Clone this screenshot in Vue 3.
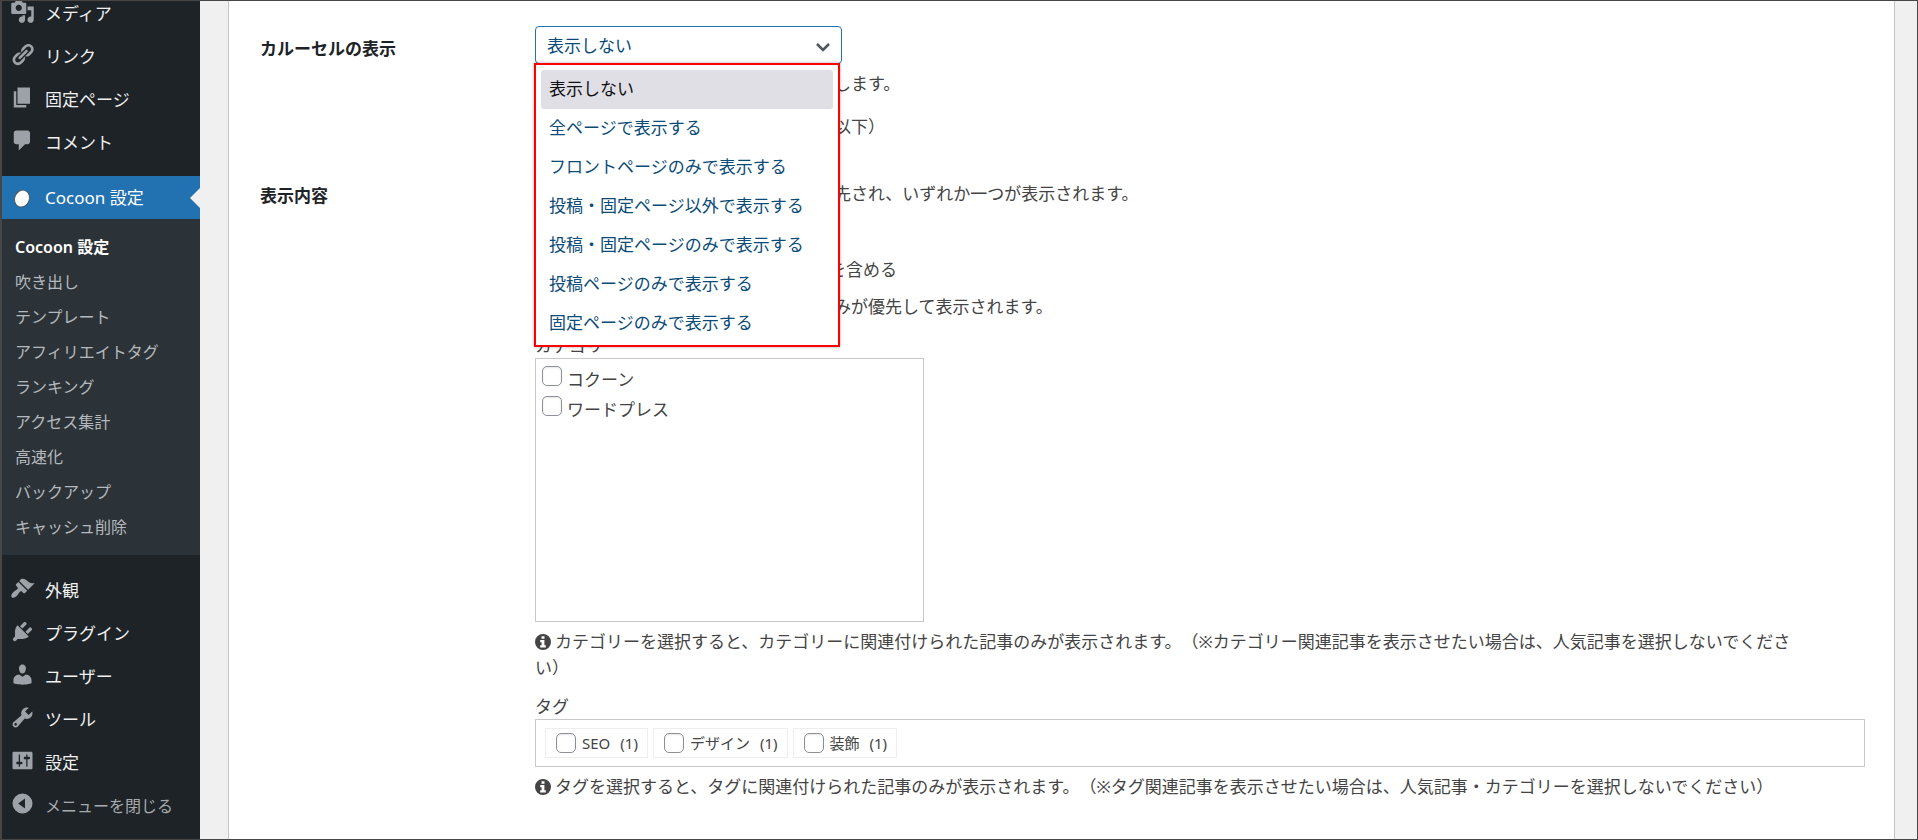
<script setup>
import { ref } from 'vue'

const topMenu = [
  { label: 'メディア', icon: 'M13 11V4c0-.55-.45-1-1-1h-1.67L9 1H5L3.67 3H2c-.55 0-1 .45-1 1v7c0 .55.45 1 1 1h10c.55 0 1-.45 1-1zM7 4.5c1.38 0 2.5 1.12 2.5 2.5S8.38 9.5 7 9.5 4.5 8.38 4.5 7 5.62 4.5 7 4.5zM14 6h5v10.5c0 1.38-1.12 2.5-2.5 2.5S14 17.88 14 16.5s1.12-2.5 2.5-2.5c.17 0 .34.02.5.05V9h-3V6zm-4 8.05V13h2v3.5c0 1.38-1.12 2.5-2.5 2.5S7 17.88 7 16.5 8.12 14 9.5 14c.17 0 .34.02.5.05z' },
  { label: 'リンク', icon: 'M17.74 2.76c1.68 1.69 1.68 4.41 0 6.1l-1.53 1.52c-1.12 1.12-2.7 1.47-4.14 1.09l2.62-2.61.76-.77.76-.76c.84-.84.84-2.2 0-3.04-.84-.85-2.2-.85-3.04 0l-.77.76-3.38 3.38c-.37-1.44-.02-3.02 1.1-4.14l1.52-1.53c1.69-1.68 4.42-1.68 6.1 0zM8.59 13.43l5.34-5.34c.42-.42.42-1.1 0-1.52-.44-.43-1.13-.39-1.53 0l-5.33 5.34c-.42.42-.42 1.1 0 1.52.44.43 1.13.39 1.52 0zm-.76 2.29l4.14-4.15c.38 1.44.03 3.02-1.09 4.14l-1.52 1.53c-1.69 1.68-4.41 1.68-6.1 0-1.68-1.68-1.68-4.42 0-6.1l1.53-1.52c1.12-1.12 2.7-1.47 4.14-1.1l-4.14 4.15c-.85.84-.85 2.2 0 3.05.84.84 2.2.84 3.04 0z' },
  { label: '固定ページ', icon: 'M6 15V2h10v13H6zm-1 1h8v2H3V5h2v11z' },
  { label: 'コメント', icon: 'M5 2h9c1.1 0 2 .9 2 2v7c0 1.1-.9 2-2 2h-2l-5 5v-5H5c-1.1 0-2-.9-2-2V4c0-1.1.9-2 2-2z' },
]

const subMenu = [
  'Cocoon 設定', '吹き出し', 'テンプレート', 'アフィリエイトタグ', 'ランキング',
  'アクセス集計', '高速化', 'バックアップ', 'キャッシュ削除',
]

const bottomMenu = [
  { label: '外観', icon: 'M14.48 11.06L7.41 3.99l1.5-1.5c.5-.56 2.3-.47 3.51.32 1.21.8 1.43 1.28 2.91 2.1 1.18.64 2.45 1.26 4.45.85zm-.71.71L6.7 4.7 4.93 6.47c-.39.39-.39 1.02 0 1.41l1.06 1.06c.39.39.39 1.03 0 1.42-.6.6-1.43 1.11-2.21 1.69-.35.26-.7.53-1.01.84C1.43 14.23.4 16.08 1.4 17.07c.99 1 2.84-.03 4.18-1.36.31-.31.58-.66.85-1.02.57-.78 1.08-1.61 1.69-2.21.39-.39 1.02-.39 1.41 0l1.06 1.06c.39.39 1.02.39 1.41 0z' },
  { label: 'プラグイン', icon: 'M13.11 4.36L9.87 7.6 8 5.73l3.24-3.24c.35-.34 1.05-.2 1.56.32.52.51.66 1.21.31 1.55zm-8 1.77l.91-1.12 9.01 9.01-1.19.84c-.71.71-2.63 1.16-3.82 1.16H6.14L4.9 17.26c-.59.59-1.54.59-2.12 0-.59-.58-.59-1.53 0-2.12l1.24-1.24v-3.88c0-1.13.4-3.19 1.09-3.89zm7.26 3.97l3.24-3.24c.34-.35 1.04-.21 1.55.31.52.51.66 1.21.31 1.55l-3.24 3.25z' },
  { label: 'ユーザー', icon: 'M10 9.25c-2.27 0-2.73-3.44-2.73-3.44C7 4.02 7.82 2 9.97 2c2.16 0 2.98 2.02 2.71 3.81 0 0-.41 3.44-2.68 3.44zm0 2.57L12.72 10c2.39 0 4.52 2.33 4.52 4.53v2.49s-3.65 1.13-7.24 1.13c-3.65 0-7.24-1.13-7.24-1.13v-2.49c0-2.25 1.94-4.48 4.47-4.48z' },
  { label: 'ツール', icon: 'M16.68 9.77c-1.34 1.34-3.3 1.67-4.95.99l-5.41 6.52c-.99.99-2.59.99-3.58 0s-.99-2.59 0-3.57l6.52-5.42c-.68-1.65-.35-3.61.99-4.95 1.28-1.28 3.12-1.62 4.72-1.06l-2.89 2.89 2.82 2.82 2.86-2.87c.53 1.58.18 3.39-1.08 4.65zM3.81 16.21c.4.39 1.04.39 1.43 0 .4-.4.4-1.04 0-1.43-.39-.4-1.03-.4-1.43 0-.39.39-.39 1.03 0 1.43z' },
  { label: '設定', icon: 'M18 16V4c0-.55-.45-1-1-1H3c-.55 0-1 .45-1 1v12c0 .55.45 1 1 1h14c.55 0 1-.45 1-1zM8 11h1c.55 0 1 .45 1 1s-.45 1-1 1H8v1.5c0 .28-.22.5-.5.5s-.5-.22-.5-.5V13H6c-.55 0-1-.45-1-1s.45-1 1-1h1V5.5c0-.28.22-.5.5-.5s.5.22.5.5V11zm5-2h-1c-.55 0-1-.45-1-1s.45-1 1-1h1V5.5c0-.28.22-.5.5-.5s.5.22.5.5V7h1c.55 0 1 .45 1 1s-.45 1-1 1h-1v5.500c0 .28-.22.5-.5.5s-.5-.22-.5-.5V9z' },
]

const options = [
  '表示しない', '全ページで表示する', 'フロントページのみで表示する',
  '投稿・固定ページ以外で表示する', '投稿・固定ページのみで表示する',
  '投稿ページのみで表示する', '固定ページのみで表示する',
]
const selected = ref(options[0])

const categories = ['コクーン', 'ワードプレス']
const tags = [
  { name: 'SEO', count: 1 },
  { name: 'デザイン', count: 1 },
  { name: '装飾', count: 1 },
]
</script>

<template>
  <div class="page">
    <nav class="sidebar" aria-label="メインメニュー">
      <ul class="menu menu-top">
        <li v-for="item in topMenu" :key="item.label">
          <a href="#" class="item">
            <svg viewBox="0 0 20 20" aria-hidden="true"><path :d="item.icon" fill-rule="evenodd" /></svg>
            <span>{{ item.label }}</span>
          </a>
        </li>
      </ul>
      <a href="#" class="item current">
        <svg viewBox="0 0 20 20" aria-hidden="true">
          <ellipse cx="10" cy="10.5" rx="6.1" ry="7.2" transform="rotate(22 10 10.5)" fill="#fff" stroke="#4b565e" stroke-width=".8" />
        </svg>
        <span>Cocoon 設定</span>
      </a>
      <ul class="submenu">
        <li v-for="(item, i) in subMenu" :key="item">
          <a href="#" :class="{ active: i === 0 }">{{ item }}</a>
        </li>
      </ul>
      <ul class="menu menu-bottom">
        <li v-for="item in bottomMenu" :key="item.label">
          <a href="#" class="item">
            <svg viewBox="0 0 20 20" aria-hidden="true"><path :d="item.icon" fill-rule="evenodd" /></svg>
            <span>{{ item.label }}</span>
          </a>
        </li>
        <li>
          <button type="button" class="item collapse">
            <svg viewBox="0 0 20 20" aria-hidden="true"><path fill-rule="evenodd" d="M10 2a8 8 0 1 0 0 16 8 8 0 0 0 0-16zM12 6v8l-5.500-4z" /></svg>
            <span>メニューを閉じる</span>
          </button>
        </li>
      </ul>
    </nav>

    <main class="panel">
      <section class="row">
        <label class="heading heading-first" for="carousel">カルーセルの表示</label>
        <div class="field">
          <div class="dropdown">
            <select id="carousel" v-model="selected">
              <option v-for="o in options" :key="o">{{ o }}</option>
            </select>
            <svg class="chevron" viewBox="0 0 16 10" aria-hidden="true"><path d="M2 2l6 6 6-6" fill="none" stroke="#50575e" stroke-width="2.500" /></svg>
            <ul class="options" role="listbox" aria-label="カルーセルの表示">
              <li
                v-for="o in options"
                :key="o"
                role="option"
                :aria-selected="o === selected"
                :class="{ chosen: o === selected }"
                @click="selected = o"
              >{{ o }}</li>
            </ul>
          </div>
          <p class="line behind after-select">します。</p>
          <p class="line behind limit">以下）</p>
        </div>
      </section>

      <section class="row content-row">
        <h2 class="heading heading-content">表示内容</h2>
        <div class="field">
          <p class="line behind">先され、いずれか一つが表示されます。</p>
          <p class="line behind include">を含める</p>
          <p class="line behind priority">みが優先して表示されます。</p>

          <p class="line category-title">カテゴリー</p>
          <div class="categories">
            <label v-for="c in categories" :key="c" class="check">
              <input type="checkbox"><span>{{ c }}</span>
            </label>
          </div>
          <p class="note">
            <svg class="info" viewBox="0 0 16 16" aria-hidden="true"><path fill-rule="evenodd" d="M8 0a8 8 0 1 0 0 16A8 8 0 0 0 8 0zM6.500 2.300h3v2.400h-3zM5.200 6h4.200v5.200h1.400v2.200H5.200v-2.200h1.400V8.200H5.200z" /></svg>カテゴリーを選択すると、カテゴリーに関連付けられた記事のみが表示されます。（※カテゴリー関連記事を表示させたい場合は、人気記事を選択しないでください）
          </p>

          <p class="line tag-title">タグ</p>
          <div class="tags">
            <label v-for="t in tags" :key="t.name" class="tag">
              <input type="checkbox"><span>{{ t.name }}</span><span class="count">({{ t.count }})</span>
            </label>
          </div>
          <p class="note">
            <svg class="info" viewBox="0 0 16 16" aria-hidden="true"><path fill-rule="evenodd" d="M8 0a8 8 0 1 0 0 16A8 8 0 0 0 8 0zM6.500 2.300h3v2.400h-3zM5.200 6h4.200v5.200h1.400v2.200H5.200v-2.200h1.400V8.200H5.200z" /></svg>タグを選択すると、タグに関連付けられた記事のみが表示されます。（※タグ関連記事を表示させたい場合は、人気記事・カテゴリーを選択しないでください）
          </p>
        </div>
      </section>
    </main>
  </div>
</template>

<style>
body {
  background: #f0f0f1;
}
</style>

<style scoped>
.page {
  box-sizing: border-box;
  display: flex;
  min-height: 100vh;
  overflow: hidden;
  border: 1px solid #464646;
  background: #f0f0f1;
  color: #444;
  font: 17px/24px "Noto Sans", "Noto Sans CJK JP", sans-serif;
  text-spacing-trim: space-all;
}

ul,
p,
h2 {
  margin: 0;
  padding: 0;
  list-style: none;
}

/* Sidebar */
.sidebar {
  flex: none;
  width: 198px;
  border-left: 1px solid #464646;
  background: #1d2327;
}

.menu-top {
  margin-top: -9px;
  margin-bottom: 12px;
}

.menu-bottom {
  padding-top: 14px;
}

.item {
  box-sizing: border-box;
  display: flex;
  align-items: center;
  gap: 10px;
  width: 100%;
  height: 43px;
  padding: 0 0 0 8px;
  border: 0;
  background: none;
  color: #f0f0f1;
  font: inherit;
  text-decoration: none;
  text-align: left;
}

.item svg {
  flex: none;
  width: 25px;
  height: 25px;
  margin-bottom: 4px;
  fill: #9ca2a7;
}

.current {
  position: relative;
  background: #2271b1;
  color: #fff;
}

.current svg {
  width: 24px;
  height: 24px;
  margin: 0 1px 0 0;
}

.current::after {
  position: absolute;
  top: 12px;
  right: 0;
  border: 10px solid transparent;
  border-right-color: #f0f0f1;
  border-left: 0;
  content: "";
}

.collapse {
  color: #a7aaad;
  font-size: 16px;
}

.submenu {
  padding: 11px 0 10px;
  background: #2c3338;
}

.submenu a {
  display: block;
  padding-left: 13px;
  color: #b4b9be;
  font-size: 16px;
  line-height: 35px;
  text-decoration: none;
}

.submenu .active {
  color: #fff;
  font-weight: 600;
}

/* Settings panel */
.panel {
  flex: 1;
  min-width: 0;
  margin: 0 22px 0 28px;
  padding: 25px 29px 39px 31px;
  border: 1px solid #c3c4c7;
  border-width: 0 1px;
  background: #fff;
}

.row {
  display: grid;
  grid-template-columns: 275px minmax(0, 1fr);
}

.heading {
  color: #1d2327;
  font-size: 17px;
  font-weight: 600;
  line-height: 24px;
}

.heading-first {
  padding-top: 11px;
}

.heading-content {
  padding-top: 2px;
}

.content-row {
  margin-top: 43px;
}

.dropdown {
  position: relative;
  width: 307px;
}

select {
  display: block;
  width: 100%;
  height: 38px;
  padding: 2px 30px 0 11px;
  border: 1px solid #2271b1;
  border-radius: 4px;
  appearance: none;
  background: #fff;
  color: #0a4b78;
  font: inherit;
}

.chevron {
  position: absolute;
  top: 16px;
  right: 11px;
  width: 16px;
  height: 10px;
}

.options {
  position: absolute;
  z-index: 1;
  top: 37px;
  right: 2px;
  left: -1px;
  padding: 5px 5px 2px;
  border: 2px solid #f00;
  background: #fff;
  box-shadow: 0 0 3px #0005;
}

.options li {
  padding: 0 0 2px 8px;
  border-radius: 3px;
  color: #0a4b78;
  line-height: 37px;
}

.options .chosen {
  background: #e0dfe6;
  color: #101014;
}

.behind {
  padding-left: 299px;
}

.after-select {
  margin-top: 8px;
}

.limit {
  margin-top: 19px;
}

.include {
  margin-top: 52px;
  padding-left: 294px;
}

.priority {
  margin-top: 13px;
}

.category-title {
  margin-top: 15px;
}

.categories {
  box-sizing: border-box;
  max-width: 389px;
  min-height: 264px;
  padding: 7px 6px;
  border: 1px solid #c8c8c8;
}

.check {
  display: flex;
  gap: 5px;
  height: 30px;
}

.check span {
  padding-top: 2px;
}

input[type="checkbox"] {
  flex: none;
  box-sizing: border-box;
  width: 20px;
  height: 20px;
  margin: 0;
  border: 1px solid #8c8f94;
  border-radius: 5px;
  appearance: none;
  background: #fff;
  box-shadow: inset 0 1px 2px #0000001a;
}

.note {
  padding: 7px 48px 0 0;
  line-height: 26px;
}

.info {
  width: 16px;
  height: 16px;
  margin-right: 4px;
  fill: #444;
  vertical-align: -2px;
}

.tag-title {
  margin-top: 14px;
}

.tags {
  display: flex;
  flex-wrap: wrap;
  gap: 5px;
  padding: 8px 9px;
  border: 1px solid #c8c8c8;
}

.tag {
  display: flex;
  align-items: center;
  gap: 6px;
  height: 28px;
  padding: 0 9px 0 10px;
  border: 1px solid #eee;
  font-size: 15px;
}

.count {
  padding-left: 4px;
}
</style>
